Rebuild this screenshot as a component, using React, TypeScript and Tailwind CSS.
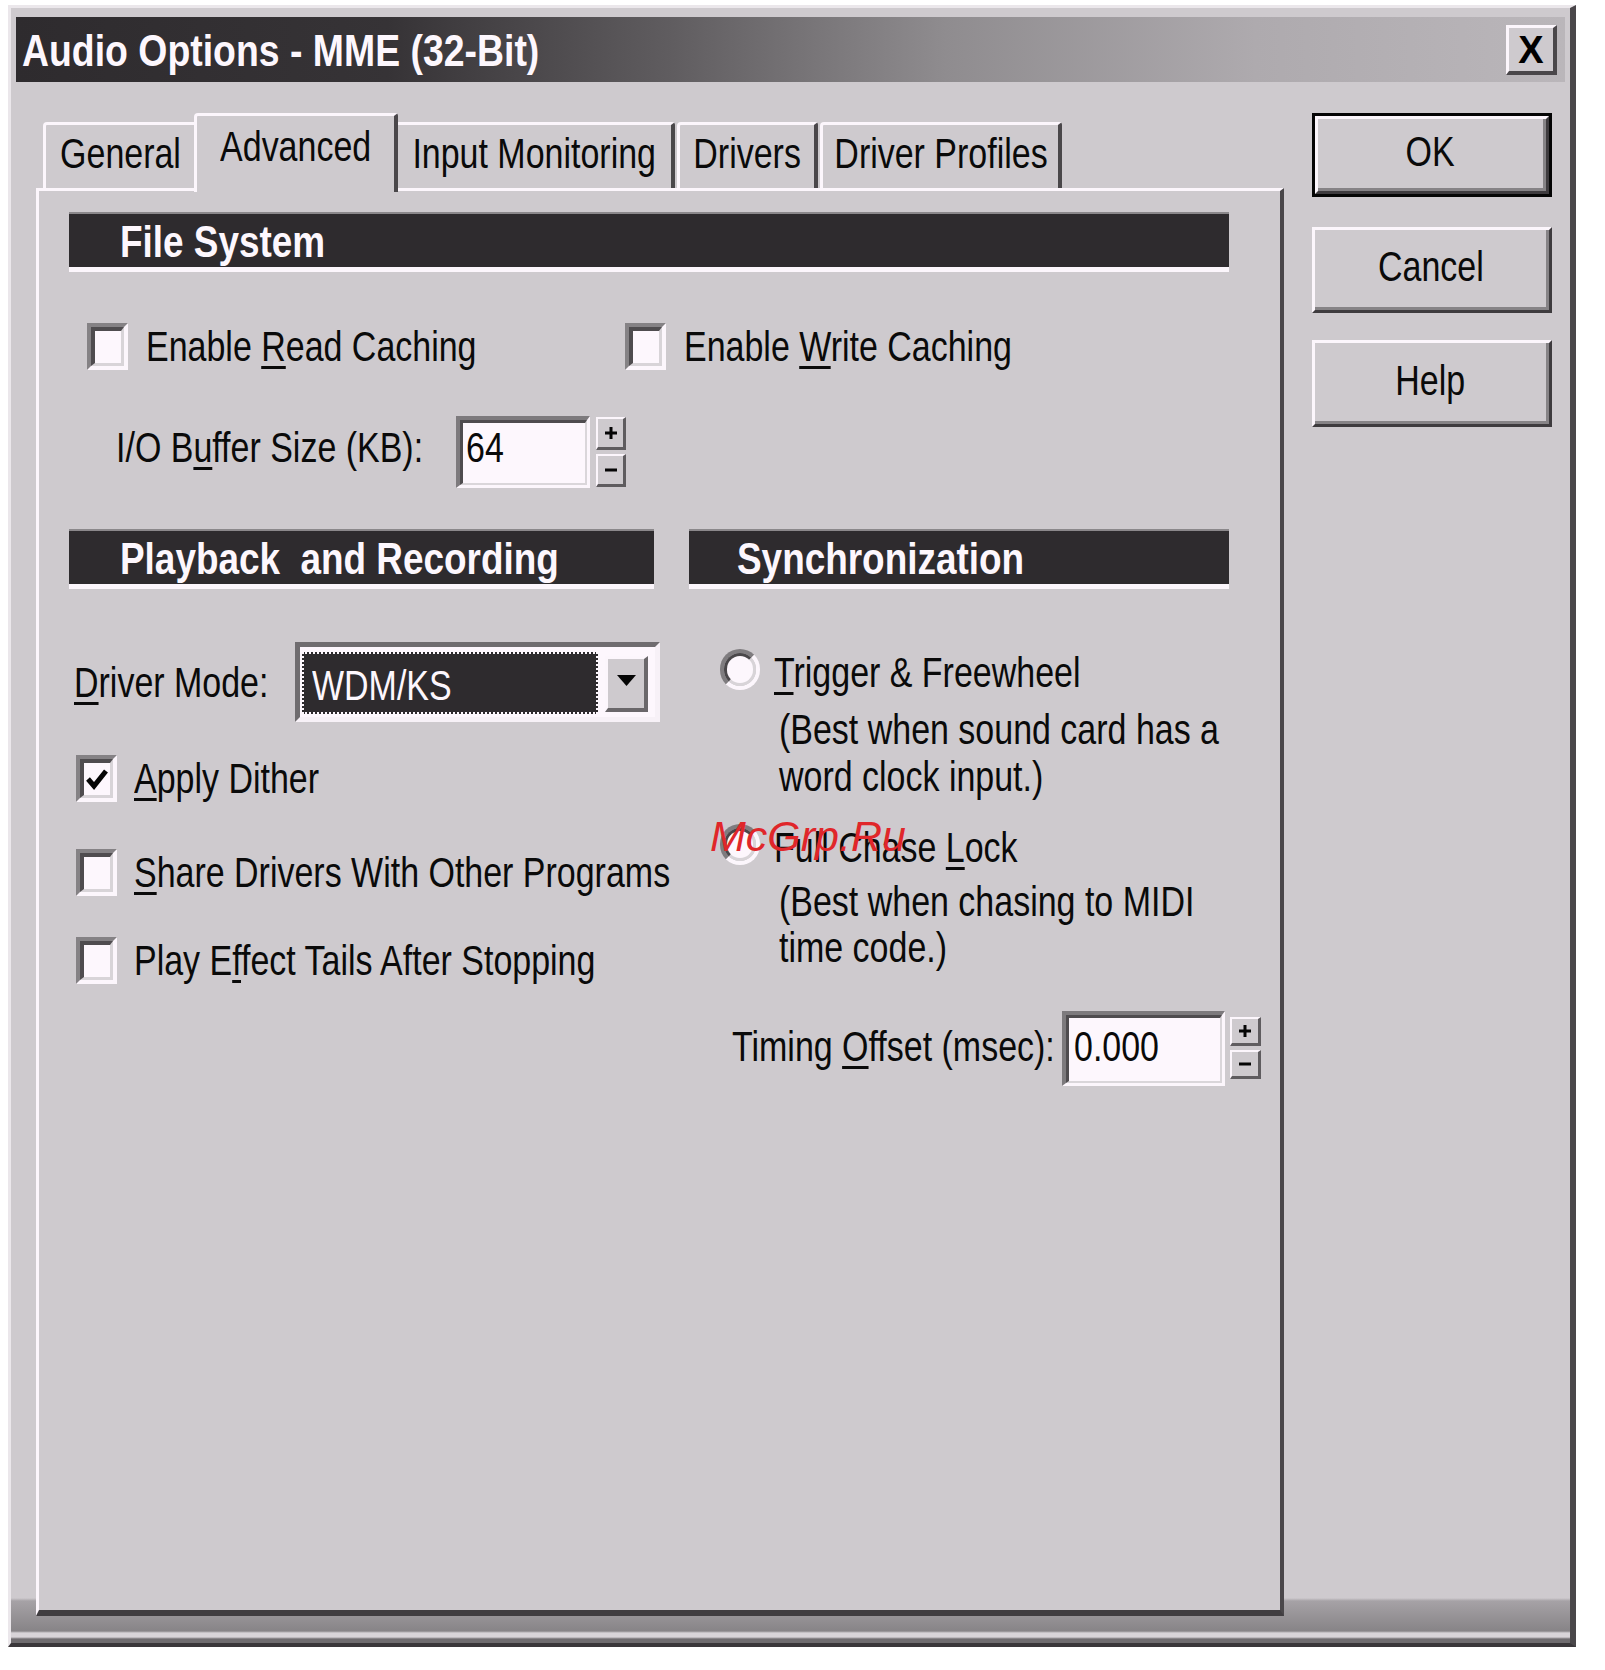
import React from "react";

function T({ children, c = "" }: { children: React.ReactNode; c?: string }) {
  return (
    <span className={"inline-block whitespace-nowrap origin-left scale-x-[0.79] text-[43px] leading-[43px] " + c}>
      {children}
    </span>
  );
}

function TC({ children }: { children: React.ReactNode }) {
  return (
    <span className="inline-block whitespace-nowrap origin-center scale-x-[0.79] text-[43px] leading-[43px] text-[#0a0a0a]">
      {children}
    </span>
  );
}

function B({ children }: { children: React.ReactNode }) {
  return (
    <span className="inline-block whitespace-pre origin-left scale-x-[0.82] text-[45px] leading-[45px] font-bold text-[#fdf7fd]">
      {children}
    </span>
  );
}

function U({ children }: { children: React.ReactNode }) {
  return <span className="underline decoration-[3px] underline-offset-[5px]">{children}</span>;
}

function Check({ checked = false }: { checked?: boolean }) {
  return (
    <div className="w-[41px] h-[47px] shrink-0 border-t-4 border-l-4 border-t-[#858285] border-l-[#858285] border-b-4 border-r-4 border-b-[#fcf6fc] border-r-[#fcf6fc]">
      <div className="w-full h-full bg-[#fdf7fd] border-t-4 border-l-4 border-t-[#4f4c4f] border-l-[#4f4c4f] border-b-[3px] border-r-[3px] border-b-[#d8d4d8] border-r-[#d8d4d8] flex items-center justify-center">
        {checked && (
          <svg width="24" height="26" viewBox="0 0 24 26">
            <path d="M3 13 L9 20 L21 5" fill="none" stroke="#050505" strokeWidth="5" />
          </svg>
        )}
      </div>
    </div>
  );
}

function Radio() {
  return (
    <div className="w-[40px] h-[41px] shrink-0 rounded-full border-[4px] border-t-[#7f7c7f] border-l-[#7f7c7f] border-b-[#fcf6fc] border-r-[#fcf6fc]">
      <div className="w-full h-full rounded-full bg-[#fdf7fd] border-[3px] border-t-[#4a474a] border-l-[#4a474a] border-b-[#d8d4d8] border-r-[#d8d4d8]" />
    </div>
  );
}

function Plus() {
  return (
    <svg width="14" height="14" viewBox="0 0 14 14">
      <path d="M7 1v12M1 7h12" stroke="#050505" strokeWidth="3" />
    </svg>
  );
}

function Minus() {
  return (
    <svg width="14" height="4" viewBox="0 0 14 4">
      <path d="M1 2h12" stroke="#050505" strokeWidth="3" />
    </svg>
  );
}

function Raised({ children, c = "" }: { children?: React.ReactNode; c?: string }) {
  return (
    <div className={"border-t-[3px] border-l-[3px] border-t-[#fcf6fc] border-l-[#fcf6fc] border-b-[3px] border-r-[3px] border-b-[#3e3b3e] border-r-[#3e3b3e] bg-[#cecace] " + c}>
      <div className="w-full h-full border-b-[3px] border-r-[3px] border-b-[#868386] border-r-[#868386] flex items-center justify-center pb-[4px]">
        {children}
      </div>
    </div>
  );
}

function SpinBtn({ children, c = "" }: { children: React.ReactNode; c?: string }) {
  return (
    <div className={"w-full shrink-0 flex items-center justify-center bg-[#cecace] border-t-2 border-l-2 border-t-[#fcf6fc] border-l-[#fcf6fc] border-b-[3px] border-r-[3px] border-b-[#5f5c5f] border-r-[#5f5c5f] " + c}>
      {children}
    </div>
  );
}

export default function App() {
  return (
    <div className="w-[1605px] h-[1670px] bg-white overflow-hidden pt-[5px] pl-[8px] font-['Liberation_Sans',Arial,sans-serif] text-[#0a0a0a]">
      <div className="w-[1568px] h-[1642px] flex flex-col border-t-[3px] border-l-[3px] border-t-[#ebe7eb] border-l-[#ebe7eb] border-r-[6px] border-r-[#4a474a] border-b-[4px] border-b-[#3a373a] bg-[linear-gradient(to_bottom,#cecace_0px,#cecace_1590px,#a6a2a6_1593px,#878487_1623px,#d8d4d8_1625px,#d8d4d8_1629px,#6f6c6f_1631px)]">
        {/* Title bar */}
        <div className="ml-[5px] mt-[9px] w-[1549px] h-[65px] shrink-0 flex items-start bg-[linear-gradient(to_right,#2e2b2e_0%,#363336_24%,#5f5c5f_42%,#8f8c8f_60%,#aeaaae_80%,#bab6ba_100%)]">
          <span className="ml-[6px] mt-[12px] inline-block whitespace-nowrap origin-left scale-x-[0.85] text-[44px] leading-[44px] font-bold text-[#fdf7fd]">
            Audio Options - MME (32-Bit)
          </span>
          <div className="ml-auto mr-[8px] mt-[8px] w-[51px] h-[50px] shrink-0 bg-[#cecace] border-t-[3px] border-l-[3px] border-t-[#fcf6fc] border-l-[#fcf6fc] border-b-[4px] border-r-[4px] border-b-[#4a474a] border-r-[#4a474a] flex items-center justify-center">
            <span className="text-[38px] leading-[38px] font-bold text-black">X</span>
          </div>
        </div>

        {/* Main row */}
        <div className="flex mt-[31px]">
          <div className="ml-[25px] w-[1248px] flex flex-col shrink-0">
            {/* Tabs */}
            <div className="h-[75px] shrink-0 flex items-end pl-[7px]">
              <div className="w-[151px] h-[66px] shrink-0 border-t-[3px] border-l-[3px] border-t-[#fcf6fc] border-l-[#fcf6fc] rounded-tl-[4px] flex justify-center pt-[7px]">
                <TC>General</TC>
              </div>
              <div className="relative z-10 w-[204px] h-[79px] shrink-0 -mb-[4px] bg-[#cecace] border-t-[3px] border-l-[3px] border-t-[#fcf6fc] border-l-[#fcf6fc] border-r-[4px] border-r-[#4a474a] rounded-tl-[4px] rounded-tr-[3px] flex justify-center pt-[9px]">
                <TC>Advanced</TC>
              </div>
              <div className="w-[277px] h-[66px] shrink-0 border-t-[3px] border-t-[#fcf6fc] border-r-[4px] border-r-[#4a474a] rounded-tr-[3px] flex justify-center pt-[7px]">
                <TC>Input Monitoring</TC>
              </div>
              <div className="ml-[2px] w-[141px] h-[66px] shrink-0 border-t-[3px] border-l-[3px] border-t-[#fcf6fc] border-l-[#fcf6fc] border-r-[4px] border-r-[#4a474a] rounded-tl-[4px] rounded-tr-[3px] flex justify-center pt-[7px]">
                <TC>Drivers</TC>
              </div>
              <div className="ml-[2px] w-[242px] h-[66px] shrink-0 border-t-[3px] border-l-[3px] border-t-[#fcf6fc] border-l-[#fcf6fc] border-r-[4px] border-r-[#4a474a] rounded-tl-[4px] rounded-tr-[3px] flex justify-center pt-[7px]">
                <TC>Driver Profiles</TC>
              </div>
            </div>

            {/* Panel */}
            <div className="h-[1428px] shrink-0 flex flex-col bg-[#cecace] border-t-[3px] border-l-[3px] border-t-[#fcf6fc] border-l-[#fcf6fc] border-r-[4px] border-r-[#4a474a] border-b-[6px] border-b-[#403d40]">
              {/* File System */}
              <div className="ml-[30px] mt-[21px] w-[1160px] h-[60px] shrink-0 bg-[#2e2b2e] border-t-2 border-t-[#8b888b] border-b-[5px] border-b-[#fcf6fc] pl-[51px] pt-[5px]">
                <B>File System</B>
              </div>

              <div className="ml-[48px] mt-[51px] flex items-center">
                <div className="w-[538px] shrink-0 flex items-center gap-[18px]">
                  <Check />
                  <T>Enable <U>R</U>ead Caching</T>
                </div>
                <div className="flex items-center gap-[18px]">
                  <Check />
                  <T>Enable <U>W</U>rite Caching</T>
                </div>
              </div>

              <div className="ml-[77px] mt-[46px] flex items-start">
                <div className="w-[340px] shrink-0 mt-[10px]">
                  <T>I/O B<U>u</U>ffer Size (KB):</T>
                </div>
                <div className="w-[134px] h-[72px] shrink-0 border-t-4 border-l-4 border-t-[#7d7a7d] border-l-[#7d7a7d] border-b-[3px] border-r-[3px] border-b-[#fcf6fc] border-r-[#fcf6fc]">
                  <div className="w-full h-full bg-[#fdf7fd] border-t-[3px] border-l-[3px] border-t-[#4f4c4f] border-l-[#4f4c4f] border-b-2 border-r-2 border-b-[#dad6da] border-r-[#dad6da] pl-[3px] pt-[3px]">
                    <T>64</T>
                  </div>
                </div>
                <div className="ml-[6px] mt-[1px] w-[30px] h-[70px] shrink-0 flex flex-col justify-between">
                  <SpinBtn c="h-[33px]"><Plus /></SpinBtn>
                  <SpinBtn c="h-[33px]"><Minus /></SpinBtn>
                </div>
              </div>

              {/* Section bars */}
              <div className="ml-[30px] mt-[41px] flex gap-[35px]">
                <div className="w-[585px] h-[60px] shrink-0 bg-[#2e2b2e] border-t-2 border-t-[#8b888b] border-b-[5px] border-b-[#fcf6fc] pl-[51px] pt-[5px]">
                  <B>{"Playback  and Recording"}</B>
                </div>
                <div className="w-[540px] h-[60px] shrink-0 bg-[#2e2b2e] border-t-2 border-t-[#8b888b] border-b-[5px] border-b-[#fcf6fc] pl-[48px] pt-[5px]">
                  <B>Synchronization</B>
                </div>
              </div>

              <div className="ml-[30px] flex">
                {/* Left column */}
                <div className="w-[620px] shrink-0 flex flex-col">
                  <div className="mt-[53px] flex items-center">
                    <div className="w-[226px] shrink-0 pl-[5px]">
                      <T><U>D</U>river Mode:</T>
                    </div>
                    <div className="w-[365px] h-[80px] shrink-0 border-t-[5px] border-l-[5px] border-t-[#6f6c6f] border-l-[#6f6c6f] border-b-[5px] border-r-[5px] border-b-[#f7f1f7] border-r-[#f7f1f7]">
                      <div className="w-full h-full bg-[#fdf7fd] flex items-start pl-[2px] pt-[5px]">
                        <div className="w-[296px] h-[62px] shrink-0 bg-[#2e2b2e] border-2 border-dotted border-[#fdf7fd] pl-[8px] pt-[10px]">
                          <T c="text-[#fdf7fd]">WDM/KS</T>
                        </div>
                        <div className="ml-[7px] mt-[4px] w-[43px] h-[56px] shrink-0 bg-[#cecace] border-t-[3px] border-l-[3px] border-t-[#fcf6fc] border-l-[#fcf6fc] border-b-[4px] border-r-[4px] border-b-[#6a676a] border-r-[#6a676a] flex items-center justify-center pb-[6px]">
                          <svg width="19" height="11" viewBox="0 0 19 11">
                            <polygon points="0,0 19,0 9.5,11" fill="#050505" />
                          </svg>
                        </div>
                      </div>
                    </div>
                  </div>

                  <div className="mt-[33px] ml-[7px] flex items-center gap-[17px]">
                    <Check checked />
                    <T><U>A</U>pply Dither</T>
                  </div>
                  <div className="mt-[47px] ml-[7px] flex items-center gap-[17px]">
                    <Check />
                    <T><U>S</U>hare Drivers With Other Programs</T>
                  </div>
                  <div className="mt-[41px] ml-[7px] flex items-center gap-[17px]">
                    <Check />
                    <T>Play E<U>f</U>fect Tails After Stopping</T>
                  </div>
                </div>

                {/* Right column */}
                <div className="w-[600px] shrink-0 flex flex-col">
                  <div className="mt-[60px] ml-[31px] flex items-start gap-[14px]">
                    <Radio />
                    <div className="mt-[2px]">
                      <T><U>T</U>rigger &amp; Freewheel</T>
                    </div>
                  </div>
                  <div className="mt-[14px] ml-[90px]">
                    <T>(Best when sound card has a</T>
                  </div>
                  <div className="mt-[4px] ml-[90px]">
                    <T>word clock input.)</T>
                  </div>
                  <div className="relative mt-[26px] ml-[31px] flex items-start gap-[14px]">
                    <Radio />
                    <div className="mt-[2px]">
                      <T>Full Chase <U>L</U>ock</T>
                    </div>
                    <span className="absolute left-[-10px] top-[-9px] text-[43px] leading-[43px] italic text-[#e0262a] whitespace-nowrap">
                      McGrp.Ru
                    </span>
                  </div>
                  <div className="mt-[11px] ml-[90px]">
                    <T>(Best when chasing to MIDI</T>
                  </div>
                  <div className="mt-[3px] ml-[90px]">
                    <T>time code.)</T>
                  </div>

                  <div className="mt-[42px] ml-[43px] flex items-start">
                    <div className="w-[330px] shrink-0 mt-[14px]">
                      <T>Timing <U>O</U>ffset (msec):</T>
                    </div>
                    <div className="w-[163px] h-[75px] shrink-0 border-t-4 border-l-4 border-t-[#7d7a7d] border-l-[#7d7a7d] border-b-[3px] border-r-[3px] border-b-[#fcf6fc] border-r-[#fcf6fc]">
                      <div className="w-full h-full bg-[#fdf7fd] border-t-[3px] border-l-[3px] border-t-[#4f4c4f] border-l-[#4f4c4f] border-b-2 border-r-2 border-b-[#dad6da] border-r-[#dad6da] pl-[5px] pt-[7px]">
                        <T>0.000</T>
                      </div>
                    </div>
                    <div className="ml-[5px] mt-[6px] w-[31px] h-[62px] shrink-0 flex flex-col justify-between">
                      <SpinBtn c="h-[29px]"><Plus /></SpinBtn>
                      <SpinBtn c="h-[29px]"><Minus /></SpinBtn>
                    </div>
                  </div>
                </div>
              </div>
            </div>
          </div>

          {/* Buttons column */}
          <div className="ml-[28px] w-[240px] shrink-0 flex flex-col">
            <div className="h-[84px] border-[3px] border-[#050505]">
              <Raised c="w-full h-full"><TC>OK</TC></Raised>
            </div>
            <Raised c="mt-[30px] h-[86px]"><TC>Cancel</TC></Raised>
            <Raised c="mt-[27px] h-[87px]"><TC>Help</TC></Raised>
          </div>
        </div>
      </div>
    </div>
  );
}
